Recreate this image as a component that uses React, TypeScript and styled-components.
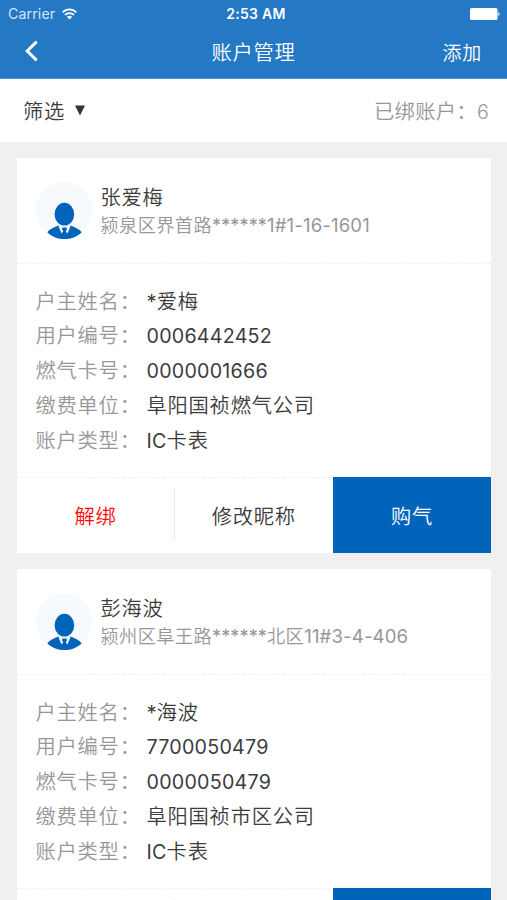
import React from "react";
import styled, { createGlobalStyle } from "styled-components";

const GlobalStyle = createGlobalStyle`
  * { box-sizing: border-box; }
  html, body { margin: 0; padding: 0; }
  body { background: #f0f0f0; overflow: hidden; }
  button { border: 0; padding: 0; background: none; font: inherit; color: inherit; }
`;

const Screen = styled.div`
  width: 507px;
  height: 900px;
  overflow: hidden;
  background: #f0f0f0;
  color: #3c3c3c;
  font-family: Inter, "Noto Sans CJK SC", sans-serif;
  font-size: 20.3px;
  line-height: 1;
  white-space: nowrap;
`;

const Header = styled.header`
  height: 79px;
  background: #2478c4;
  color: #fff;
  border-bottom: 1px solid #4a95d6;
`;

const StatusBar = styled.div`
  display: grid;
  grid-template-columns: 1fr auto 1fr;
  align-items: center;
  height: 27px;
  padding: 0 7px 0 8px;
  font-size: 13.5px;
`;

const Carrier = styled.div`
  display: flex;
  align-items: center;
  gap: 7px;
  padding-top: 1px;
  color: #d3e6f6;
  font-size: 14.2px;
  letter-spacing: 0.1px;
`;

const Clock = styled.div`
  font-weight: 600;
  font-size: 14px;
  letter-spacing: 0.25px;
  padding: 1px 0 0 4px;
`;

const Battery = styled.svg`
  justify-self: end;
`;

const NavBar = styled.nav`
  display: grid;
  grid-template-columns: 100px 1fr 100px;
  align-items: center;
  height: 51px;
  padding: 0 25px;
`;

const BackButton = styled.button`
  display: flex;
  justify-content: flex-start;
  padding-bottom: 3px;
`;

const Title = styled.h1`
  margin: 0;
  padding-top: 2px;
  text-align: center;
  font-size: 20.3px;
  font-weight: 400;
`;

const AddButton = styled.button`
  padding-top: 2px;
  text-align: right;
  font-size: 19px;
`;

const FilterBar = styled.div`
  display: flex;
  align-items: center;
  justify-content: space-between;
  height: 62.5px;
  padding: 4px 18px 0 23px;
  background: #fff;
`;

const FilterButton = styled.button`
  display: flex;
  align-items: center;
  gap: 10px;

  svg { margin-bottom: 4px; }
`;

const BoundCount = styled.div`
  color: #979797;
  font-weight: 350;
`;

const CardList = styled.main`
  display: flex;
  flex-direction: column;
  gap: 16px;
  padding: 16px 16px 0 16.5px;
`;

const Card = styled.article`
  height: 395px;
  flex: none;
  background: #fff;
`;

const Profile = styled.div`
  display: flex;
  align-items: center;
  gap: 9px;
  height: 106px;
  padding: 0 19px;
  border-bottom: 1px dashed #f0f0f0;
`;

const Avatar = styled.div`
  width: 56px;
  height: 56px;
  border-radius: 50%;
  background: #f6fafd;

  svg { display: block; overflow: visible; }
`;

const Identity = styled.div`
  display: flex;
  flex-direction: column;
  gap: 8px;
  padding-top: 2px;
`;

const Name = styled.div`
  height: 21px;
  line-height: 21px;
`;

const Address = styled.div`
  height: 19px;
  line-height: 19px;
  font-size: 18.2px;
  color: #979797;
`;

const Details = styled.dl`
  display: grid;
  grid-template-columns: 111px 1fr;
  grid-auto-rows: 34.75px;
  align-items: center;
  height: 214px;
  margin: 0;
  padding: 21px 0 0 19px;
  border-bottom: 1px dashed #f0f0f0;
`;

const Label = styled.dt`
  color: #979797;
  font-weight: 350;
`;

const Value = styled.dd`
  margin: 0;
`;

const Actions = styled.div`
  display: grid;
  grid-template-columns: repeat(3, 1fr);
  height: 76px;
  margin-top: -1px;
`;

const actionBackground = {
  danger: "linear-gradient(#e9e9e9, #e9e9e9) right 11px / 1px 53px no-repeat",
  plain: "transparent",
  primary: "#0064bb",
};

const actionColor = { danger: "#ff0a0a", plain: "#3c3c3c", primary: "#fff" };

const Action = styled.button<{ $kind: "danger" | "plain" | "primary" }>`
  display: flex;
  align-items: center;
  justify-content: center;
  padding-top: 6px;
  color: ${({ $kind }) => actionColor[$kind]};
  background: ${({ $kind }) => actionBackground[$kind]};
`;

const Han = styled.span<{ $tracking: number }>`
  font-weight: 350;
  letter-spacing: ${({ $tracking }) => $tracking}px;
`;

const Latin = styled.span<{ $tracking: number; $scale: number }>`
  font-size: ${({ $scale }) => $scale}em;
  letter-spacing: ${({ $tracking }) => $tracking}px;
`;

const Stars = styled.span`
  letter-spacing: 0.05px;
`;

type MixedProps = { text: string; han?: number; latin?: number; scale?: number };

/* Chinese and Latin runs carry their own size and tracking. */
function Mixed({ text, han = 0.75, latin = 0.22, scale = 0.97 }: MixedProps) {
  const runs = text.match(/\*+|[\u0020-\u0029\u002b-\u007e]+|[^\u0020-\u007e]+/g) ?? [];
  return (
    <>
      {runs.map((run, i) => {
        if (run[0] === "*") return <Stars key={i}>{run}</Stars>;
        return /^[\u0020-\u007e]/.test(run) ? (
          <Latin key={i} $tracking={latin} $scale={scale}>{run}</Latin>
        ) : (
          <Han key={i} $tracking={han}>{run}</Han>
        );
      })}
    </>
  );
}

function WifiIcon() {
  return (
    <svg width="15" height="12" viewBox="0 0 15 12" fill="none" stroke="#fff" strokeWidth="1.7">
      <path d="M0.6 4.3C4.5 0.4 10.5 0.4 14.4 4.3" />
      <path d="M3 6.9C5.5 4.4 9.5 4.4 12 6.9" />
      <path d="M7.5 11.4L4.9 8.8C6.3 7.4 8.7 7.4 10.1 8.8Z" fill="#fff" stroke="none" />
    </svg>
  );
}

function BatteryIcon() {
  return (
    <Battery width="30" height="12" viewBox="0 0 30 12" fill="#fff">
      <rect x="0" y="0" width="27.5" height="12" rx="1.6" />
      <path d="M28.3 4C30 4.6 30 7.4 28.3 8Z" />
    </Battery>
  );
}

function PersonIcon() {
  return (
    <svg width="56" height="56" viewBox="0 0 56 56" fill="#0064bb">
      <path d="M22.5 43.6L24.5 43H32.5L34.5 43.6C38.5 45.4 43.3 47 45.7 50.2C41 55 34.5 57 28.5 57C22.5 57 16 55 11.3 50.2C13.7 47 18.5 45.4 22.5 43.6Z" />
      <path d="M23.4 42H33.6L34.4 44.6L31.4 51.6L28.5 48L25.6 51.6L22.6 44.6Z" fill="#f6fafd" />
      <path d="M26.4 45.6H30.6L31 47.4L29.8 49L31.2 53H25.8L27.2 49L26 47.4Z" />
      <ellipse cx="28.4" cy="32.2" rx="9.8" ry="11.4" />
    </svg>
  );
}

type Account = { name: string; address: string; fields: [string, string][] };

const accounts: Account[] = [
  {
    name: "张爱梅",
    address: "颍泉区界首路******1#1-16-1601",
    fields: [
      ["户主姓名", "*爱梅"],
      ["用户编号", "0006442452"],
      ["燃气卡号", "0000001666"],
      ["缴费单位", "阜阳国祯燃气公司"],
      ["账户类型", "IC卡表"],
    ],
  },
  {
    name: "彭海波",
    address: "颍州区阜王路******北区11#3-4-406",
    fields: [
      ["户主姓名", "*海波"],
      ["用户编号", "7700050479"],
      ["燃气卡号", "0000050479"],
      ["缴费单位", "阜阳国祯市区公司"],
      ["账户类型", "IC卡表"],
    ],
  },
];

function AccountCard({ account }: { account: Account }) {
  return (
    <Card>
      <Profile>
        <Avatar><PersonIcon /></Avatar>
        <Identity>
          <Name><Mixed text={account.name} /></Name>
          <Address><Mixed text={account.address} han={0.4} latin={0.15} scale={1.02} /></Address>
        </Identity>
      </Profile>
      <Details>
        {account.fields.map(([label, value]) => (
          <React.Fragment key={label}>
            <Label><Mixed text={`${label}：`} /></Label>
            <Value><Mixed text={value} /></Value>
          </React.Fragment>
        ))}
      </Details>
      <Actions>
        <Action $kind="danger"><Mixed text="解绑" /></Action>
        <Action $kind="plain"><Mixed text="修改昵称" /></Action>
        <Action $kind="primary"><Mixed text="购气" /></Action>
      </Actions>
    </Card>
  );
}

export default function App() {
  return (
    <Screen>
      <GlobalStyle />
      <Header>
        <StatusBar>
          <Carrier>Carrier <WifiIcon /></Carrier>
          <Clock>2:53 AM</Clock>
          <BatteryIcon />
        </StatusBar>
        <NavBar>
          <BackButton aria-label="返回">
            <svg width="13" height="22" viewBox="0 0 13 22" fill="none" stroke="#fff" strokeWidth="3">
              <path d="M11.7 1.6L2.2 11L11.7 20.4" />
            </svg>
          </BackButton>
          <Title><Mixed text="账户管理" /></Title>
          <AddButton><Mixed text="添加" /></AddButton>
        </NavBar>
      </Header>
      <FilterBar>
        <FilterButton>
          <Mixed text="筛选" />
          <svg width="10" height="11" viewBox="0 0 10 11" fill="#333"><path d="M0 0.5H10L5 10.5Z" /></svg>
        </FilterButton>
        <BoundCount><Mixed text="已绑账户：6" han={0.3} /></BoundCount>
      </FilterBar>
      <CardList>
        {accounts.map((account) => (
          <AccountCard key={account.name} account={account} />
        ))}
      </CardList>
    </Screen>
  );
}
